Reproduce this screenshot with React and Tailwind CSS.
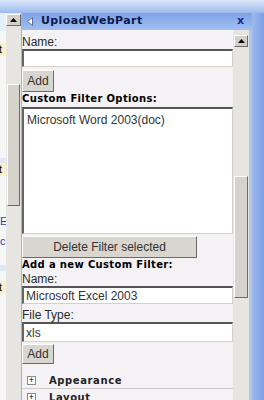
import React from "react";

const sans = { fontFamily: '"Liberation Sans", Arial, sans-serif' };
const verdana = { fontFamily: '"DejaVu Sans", Verdana, sans-serif' };

// classic win2k inset / outset boxes
const inset =
  "bg-white border-t-2 border-l-2 border-t-[#555] border-l-[#666] border-r border-b border-r-[#d4d0c8] border-b-[#d4d0c8]";
const outset =
  "bg-[#d9d6cf] border border-t-white border-l-white border-r-[#6b6b6b] border-b-[#6b6b6b] text-[#333] text-[12px] leading-none flex items-center justify-center";

const UpButton = () => (
  <div className="h-[12px] w-full shrink-0 bg-[#d4d0c8] border border-t-white border-l-white border-r-[#6b6b6b] border-b-[#6b6b6b] flex items-center justify-center">
    <svg width="7" height="4" viewBox="0 0 7 4">
      <polygon points="0,4 7,4 3.5,0" fill="#000" />
    </svg>
  </div>
);

const Label = ({ children, bold }) =>
  bold ? (
    <div
      className="h-[14px] text-[10px] leading-[14px] font-bold text-black tracking-[0.35px] whitespace-nowrap"
      style={verdana}
    >
      {children}
    </div>
  ) : (
    <div className="h-[14px] text-[12px] leading-[14px] text-[#2b2b2b] whitespace-nowrap" style={sans}>
      {children}
    </div>
  );

const Input = ({ value, h }) => (
  <div className={`${inset} w-[211px] ${h} flex items-center px-[2px] text-[12px] text-[#333]`} style={sans}>
    {value}
  </div>
);

const Section = ({ title }) => (
  <div className="flex items-center h-[13px] pl-[5px] gap-[13px]">
    <div className="w-[9px] h-[9px] border border-[#8a8a8a] bg-white flex items-center justify-center text-[9px] leading-none text-black">
      +
    </div>
    <div className="text-[10px] font-bold tracking-[0.6px] text-[#222]" style={verdana}>
      {title}
    </div>
  </div>
);

export default function App() {
  return (
    <div className="w-[264px] h-[400px] overflow-hidden flex flex-col bg-white" style={sans}>
      {/* top browser strip */}
      <div className="h-[13px] shrink-0 bg-gradient-to-b from-[#dbe7f9] to-[#9dbbee]" />

      <div className="flex flex-1 min-h-0">
        {/* page behind */}
        <div className="w-[6px] overflow-hidden bg-[#f6f6f6] text-[11px] leading-none">
          <div className="h-[18px] bg-[#e6eefa]" />
          <div className="h-[12px]" />
          <div className="h-[12px] bg-[#fbf1c4] text-black -ml-[1px] flex items-center">t</div>
          <div className="h-[103px]" />
          <div className="h-[5px] bg-[#dfe7f8]" />
          <div className="h-[12px] bg-[#fbf1c4] text-black -ml-[1px] flex items-center">t</div>
          <div className="h-[40px]" />
          <div className="h-[12px] text-[#2346b8] flex items-center">E</div>
          <div className="h-[8px]" />
          <div className="h-[12px] text-[#2346b8] flex items-center">c</div>
          <div className="h-[18px]" />
          <div className="h-[6px] bg-[#dfe7f8]" />
          <div className="h-[10px]" />
          <div className="h-[12px] bg-[#fbf1c4] text-black -ml-[1px] flex items-center">t</div>
        </div>

        {/* left scrollbar */}
        <div className="w-[15px] bg-[#e7e5e1] pt-[1px]">
          <UpButton />
          <div className="h-[58px]" />
          <div className="h-[122px] mx-[1px] bg-[#d6d3cc] border border-t-white border-l-white border-r-[#6b6b6b] border-b-[#6b6b6b]" />
        </div>

        {/* web part panel */}
        <div className="w-[231px] flex flex-col border-l border-[#9db6e0]">
          <div className="h-[17px] shrink-0 flex items-center bg-gradient-to-b from-[#7ea3e6] to-[#a2bff1] pl-[5px] pr-[6px]">
            <svg width="6" height="9" viewBox="0 0 6 9">
              <polygon points="5.5,0.5 5.5,8.5 0.5,4.5" fill="#fff" stroke="#5d6f99" strokeWidth="1" />
            </svg>
            <div className="ml-[8px] text-[11px] font-bold tracking-[0.4px] text-[#0c1a4d]" style={verdana}>
              UploadWebPart
            </div>
            <div className="ml-auto mr-[2px] text-[11px] font-bold text-[#1b2a8c]" style={verdana}>
              x
            </div>
          </div>

          <div className="flex flex-1 min-h-0">
            <div className="w-[212px] bg-[#f4f2f5] pt-[5px] overflow-hidden">
              <Label>Name:</Label>
              <Input value="" h="h-[18px]" />
              <div className={`${outset} w-[32px] h-[22px] mt-[3px]`}>Add</div>
              <Label bold>Custom Filter Options:</Label>
              <div className={`${inset} w-[211px] h-[127px] mt-[1px] px-[3px] pt-[2px] text-[12px] text-[#333]`}>
                Microsoft Word 2003(doc)
              </div>
              <div className={`${outset} w-[175px] h-[22px] mt-[2px]`}>Delete Filter selected</div>
              <Label bold>Add a new Custom Filter:</Label>
              <Label>Name:</Label>
              <Input value="Microsoft Excel 2003" h="h-[18px]" />
              <div className="h-[4px]" />
              <Label>File Type:</Label>
              <Input value="xls" h="h-[20px]" />
              <div className={`${outset} w-[32px] h-[20px] mt-[2px]`}>Add</div>
              <div className="h-[10px]" />
              <Section title="Appearance" />
              <div className="h-px bg-[#cfcccc] mt-[1px]" />
              <div className="h-[2px]" />
              <Section title="Layout" />
            </div>

            {/* right scrollbar */}
            <div className="w-[16px] bg-[#e7e5e1] pt-[5px] px-[1px]">
              <div className="h-[14px]">
                <UpButton />
              </div>
              <div className="h-[127px]" />
              <div className="h-[122px] bg-[#d6d3cc] border border-t-white border-l-white border-r-[#6b6b6b] border-b-[#6b6b6b]" />
            </div>
            <div className="w-[3px] bg-[#b3c7ee]" />
          </div>
        </div>

        {/* right frame strip */}
        <div className="w-[12px] bg-gradient-to-r from-[#9fb9ec] to-[#7a9fe6]" />
      </div>
    </div>
  );
}
